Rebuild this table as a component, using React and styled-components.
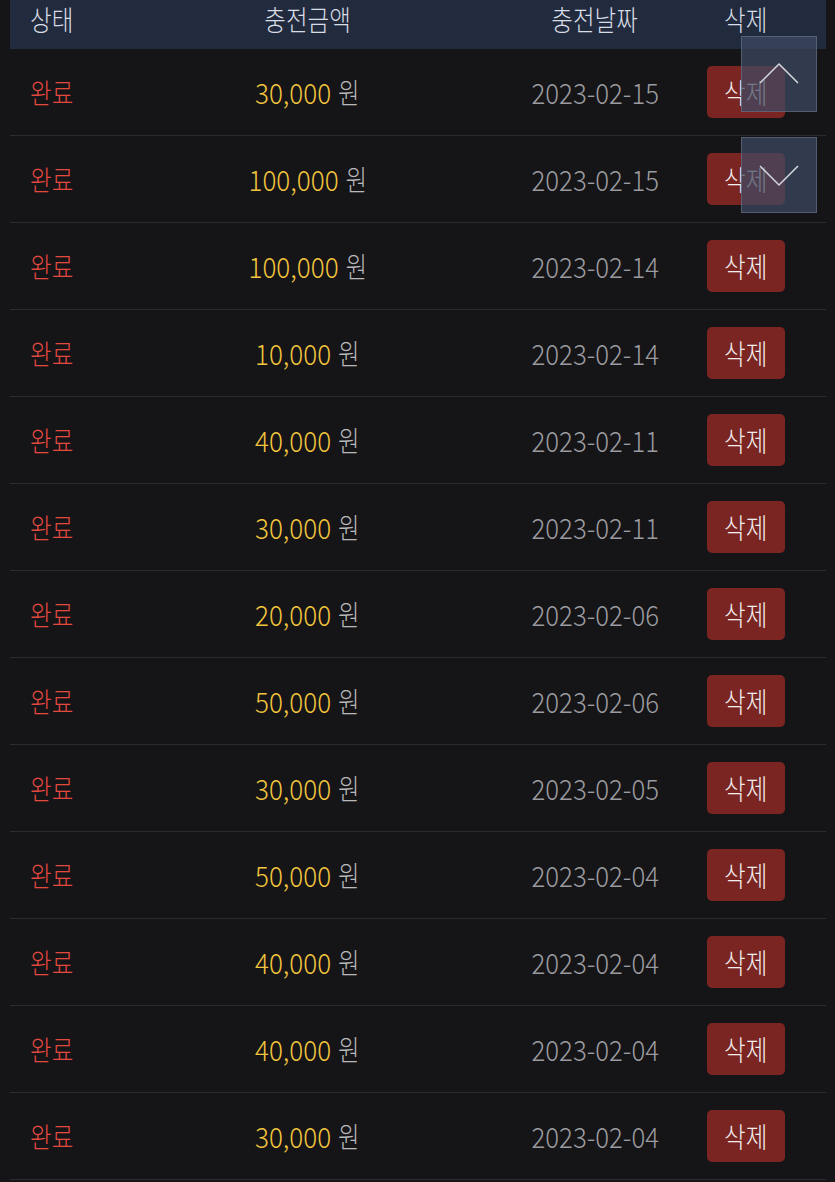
import React from 'react';
import styled, { createGlobalStyle } from 'styled-components';

const GlobalStyle = createGlobalStyle`
  html, body {
    margin: 0;
    padding: 0;
    background: #151417;
    font-family: "Noto Sans CJK KR", "Noto Sans", sans-serif;
  }
`;

const rows = [
  [30000, '2023-02-15'],
  [100000, '2023-02-15'],
  [100000, '2023-02-14'],
  [10000, '2023-02-14'],
  [40000, '2023-02-11'],
  [30000, '2023-02-11'],
  [20000, '2023-02-06'],
  [50000, '2023-02-06'],
  [30000, '2023-02-05'],
  [50000, '2023-02-04'],
  [40000, '2023-02-04'],
  [40000, '2023-02-04'],
  [30000, '2023-02-04'],
];

const Page = styled.div`
  position: relative;
  height: 1182px;
  overflow: hidden;
  padding: 0 9px 0 10px;
  background: #151417;
`;

const Grid = styled.div`
  display: grid;
  grid-template-columns: 170px 256px 1fr 160px;
  align-items: center;
  font-size: 28px;
  font-weight: 300;
`;

const HeadRow = styled(Grid)`
  height: 49px;
  background: #212b3d;
  color: #d9dde5;
  line-height: 38px;
  align-items: start;
`;

const Row = styled(Grid)`
  height: 86px;
  border-bottom: 1px solid #2c2c2f;
`;

const Cell = styled.div`
  text-align: ${p => p.align || 'center'};
  padding-left: ${p => p.pl || 0}px;
  white-space: nowrap;
`;

/* the reference face is a narrow one, squeeze the wide CJK face to match */
const Label = styled.span`
  display: inline-block;
  transform: scaleX(${p => p.scale || 0.84});
  transform-origin: ${p => (p.left ? 'left center' : 'center')};
  color: ${p => p.color || 'inherit'};
`;

const Amount = styled.span`
  color: #f2c53d;
`;

const Won = styled.span`
  color: #b9b9bc;
  margin-left: 6px;
  display: inline-block;
  transform: scaleX(0.9);
`;

const DeleteButton = styled.button`
  display: flex;
  align-items: center;
  justify-content: center;
  margin: 0 auto;
  width: 78px;
  height: 52px;
  border: none;
  border-radius: 5px;
  background: #7a2521;
  color: #f4eeee;
  font-family: inherit;
  font-size: 28px;
  font-weight: 300;
  padding: 0;
`;

const ScrollButton = styled.div`
  position: absolute;
  left: 741px;
  top: ${p => p.top}px;
  width: 76px;
  height: 76px;
  box-sizing: border-box;
  background: rgba(62, 74, 98, 0.72);
  border: 1px solid rgba(110, 122, 145, 0.55);
  display: flex;
  align-items: center;
  justify-content: center;
`;

const Chevron = ({ up }) => (
  <svg width="40" height="24" viewBox="0 0 40 24">
    <polyline
      points={up ? '1,21 20,2 39,21' : '1,3 20,22 39,3'}
      fill="none"
      stroke="#d6d9df"
      strokeWidth="1.5"
    />
  </svg>
);

export default function App() {
  return (
    <Page>
      <GlobalStyle />
      <HeadRow>
        <Cell align="left" pl={20}><Label left>상태</Label></Cell>
        <Cell><Label>충전금액</Label></Cell>
        <Cell pl={88}><Label>충전날짜</Label></Cell>
        <Cell><Label>삭제</Label></Cell>
      </HeadRow>
      {rows.map(([amount, date], i) => (
        <Row key={i}>
          <Cell align="left" pl={20}>
            <Label left color="#e2493f">완료</Label>
          </Cell>
          <Cell>
            <Label scale={0.93}>
              <Amount>{amount.toLocaleString('en-US')}</Amount>
              <Won>원</Won>
            </Label>
          </Cell>
          <Cell pl={88}>
            <Label scale={0.92} color="#9c9ca0">{date}</Label>
          </Cell>
          <Cell>
            <DeleteButton><Label>삭제</Label></DeleteButton>
          </Cell>
        </Row>
      ))}
      <ScrollButton top={36}>
        <Chevron up />
      </ScrollButton>
      <ScrollButton top={137}>
        <Chevron />
      </ScrollButton>
    </Page>
  );
}
